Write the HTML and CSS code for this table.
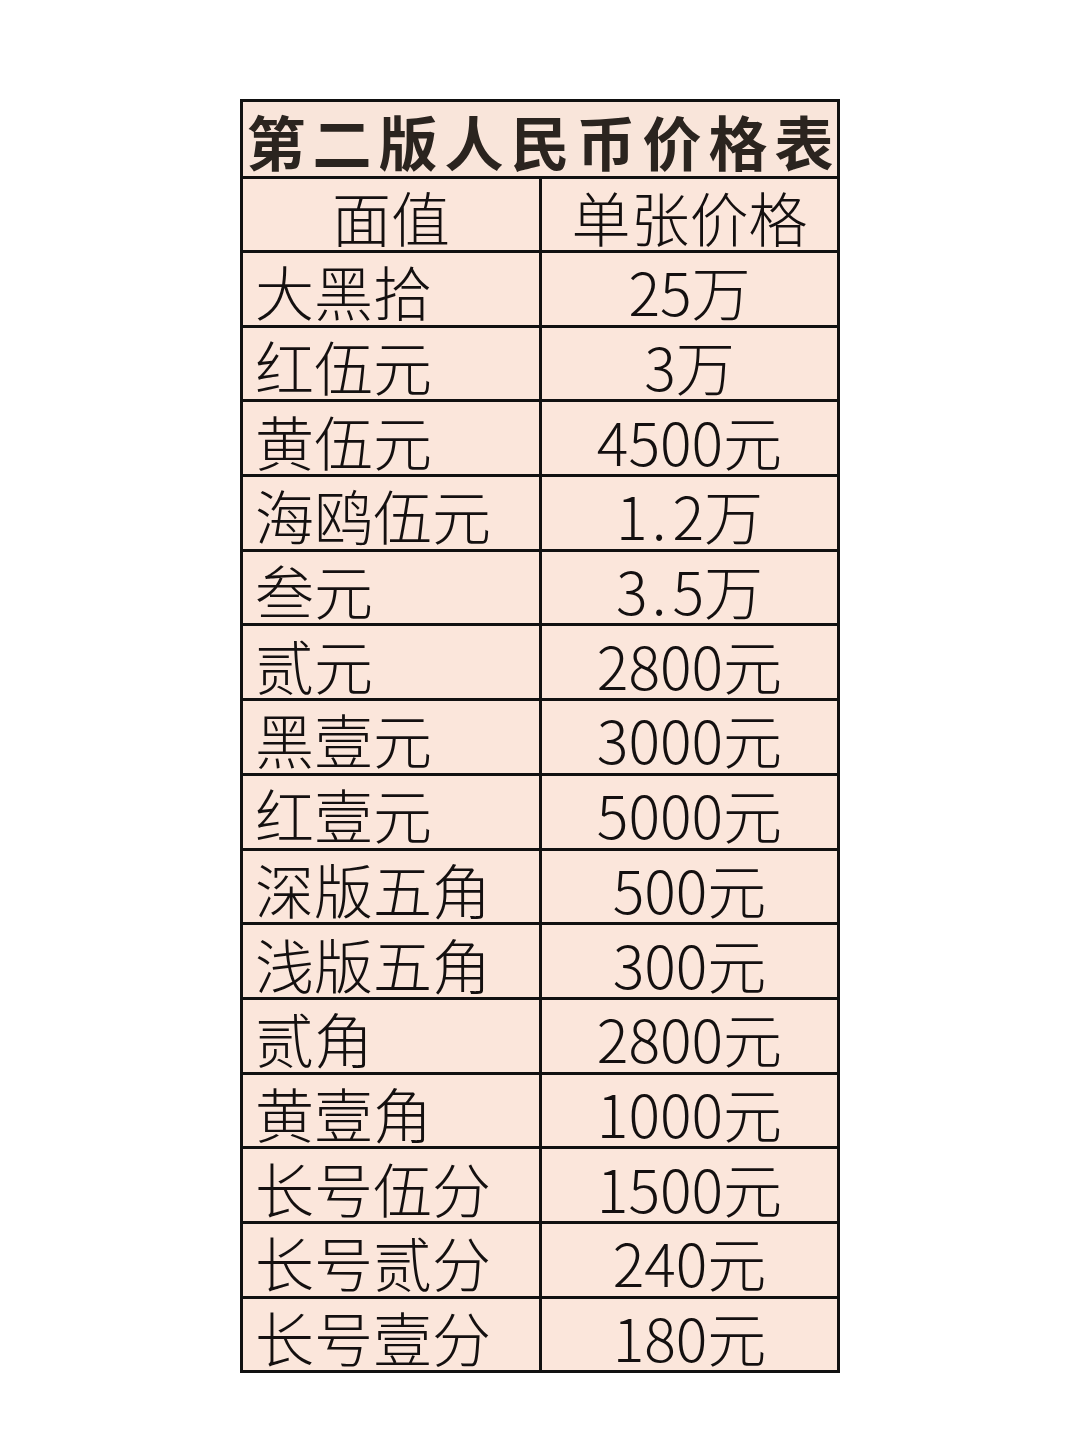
FILE: index.html
```html
<!DOCTYPE html>
<html lang="zh-CN">
<head>
<meta charset="utf-8">
<title>第二版人民币价格表</title>
<link rel="stylesheet" href="styles.css">
</head>
<body>
<div class="page">
  <div class="sheet">
    <div class="title">第二版人民币价格表</div>
    <div class="cell head">面值</div>
    <div class="cell head">单张价格</div>

    <div class="cell name">大黑拾</div><div class="cell price">25万</div>
    <div class="cell name">红伍元</div><div class="cell price">3万</div>
    <div class="cell name">黄伍元</div><div class="cell price">4500元</div>
    <div class="cell name">海鸥伍元</div><div class="cell price">1<span class="dot">.</span>2万</div>
    <div class="cell name">叁元</div><div class="cell price">3<span class="dot">.</span>5万</div>
    <div class="cell name">贰元</div><div class="cell price">2800元</div>
    <div class="cell name">黑壹元</div><div class="cell price">3000元</div>
    <div class="cell name">红壹元</div><div class="cell price">5000元</div>
    <div class="cell name">深版五角</div><div class="cell price">500元</div>
    <div class="cell name">浅版五角</div><div class="cell price">300元</div>
    <div class="cell name">贰角</div><div class="cell price">2800元</div>
    <div class="cell name">黄壹角</div><div class="cell price">1000元</div>
    <div class="cell name">长号伍分</div><div class="cell price">1500元</div>
    <div class="cell name">长号贰分</div><div class="cell price">240元</div>
    <div class="cell name">长号壹分</div><div class="cell price">180元</div>
  </div>
</div>
</body>
</html>
```
FILE: styles.css
```css
html, body {
  margin: 0;
  padding: 0;
  background: #ffffff;
}

.page {
  width: 1080px;
  height: 1440px;
  padding-top: 99px;
  box-sizing: border-box;
  display: flex;
  justify-content: center;
}

.sheet {
  width: 600px;
  display: grid;
  grid-template-columns: 296px 295px;
  grid-template-rows: 74px 71px repeat(15, 71.7px);
  gap: 3px;
  padding: 3px;
  background: #111111;
  align-self: flex-start;
  box-sizing: border-box;
  font-family: "Noto Sans CJK SC", "Noto Sans", sans-serif;
  color: #141010;
}

.title {
  grid-column: 1 / span 2;
  background: #f9e5da;
  display: flex;
  align-items: center;
  justify-content: center;
  font-size: 59px;
  font-weight: 700;
  letter-spacing: 7px;
  padding-left: 7px;
  padding-top: 2px;
  box-sizing: border-box;
  color: #2b241f;
  line-height: 1;
  white-space: nowrap;
}

.cell {
  background: #fbe6db;
  display: flex;
  align-items: center;
  font-size: 59px;
  font-weight: 300;
  line-height: 1;
  white-space: nowrap;
  padding-top: 4px;
  box-sizing: border-box;
}

.head {
  justify-content: center;
}

.name {
  padding-left: 12px;
}

.price {
  justify-content: center;
}

.dot {
  padding: 0 6px 0 4px;
}
```
